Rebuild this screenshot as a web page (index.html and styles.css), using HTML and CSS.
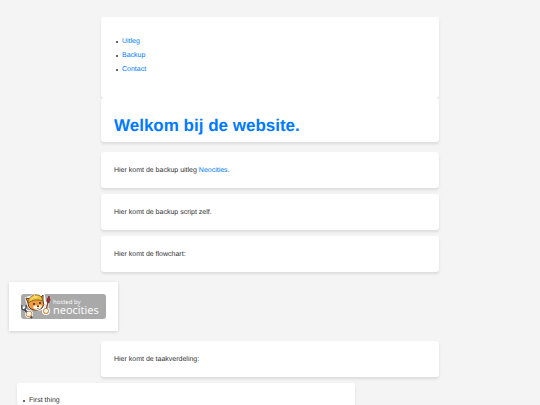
FILE: index.html
```html
<!DOCTYPE html>
<html lang="nl">
<head>
<meta charset="utf-8">
<meta name="viewport" content="width=device-width, initial-scale=1">
<title>Welkom bij de website.</title>
<link rel="stylesheet" href="styles.css">
</head>
<body>
<nav class="card nav">
  <ul class="list">
    <li><a href="#uitleg">Uitleg</a></li>
    <li><a href="#backup">Backup</a></li>
    <li><a href="#contact">Contact</a></li>
  </ul>
</nav>
<header class="card header">
  <h1>Welkom bij de website.</h1>
</header>
<main class="content">
  <p class="card" id="uitleg">Hier komt de backup uitleg <a href="#neocities">Neocities</a>.</p>
  <p class="card" id="backup">Hier komt de backup script zelf.</p>
  <p class="card">Hier komt de flowchart:</p>
  <a class="hosted" id="neocities" href="#neocities" aria-label="hosted by neocities">
    <svg class="badge" viewBox="0 0 85 25" aria-hidden="true">
      <rect x="0" y="0" width="85" height="25" rx="3" fill="#a9a9a9"/>
      <g stroke="#fff" stroke-width="2" stroke-linejoin="round" fill="#fff">
        <path d="M6 8 5 4 9 3Q14 0 19 1L23 1 24 9Q23 15 17 16 9 16 7 11Z"/>
        <path d="M2 13 9 22M25 16 28 3" stroke-width="3"/>
        <circle cx="8" cy="20" r="3"/><circle cx="25" cy="17" r="3"/>
      </g>
      <path d="M3 15 11 24" stroke="#454b50" stroke-width="2"/>
      <path d="M1 11Q0 16 3 16 6 15 5 11" fill="none" stroke="#454b50" stroke-width="1.3"/>
      <path d="M5 4 9 5 19 4 22 1 22 7Q24 11 21 14 16 18 10 15 7 13 7 9Z" fill="#f29a42" stroke="#5b3a22" stroke-width="1"/>
      <path d="M12 13Q14 10 16 12 19 10 21 12 20 15 17 16 13 16 12 13Z" fill="#fff0d8"/>
      <path d="M7 9Q7 3 13 1 19 0 21 4L22 7Q14 4 7 9Z" fill="#ecc03d" stroke="#795a20" stroke-width=".8"/>
      <path d="M10 6Q12 2 17 3M13 1 15 4" fill="none" stroke="#ffe680" stroke-width="1"/>
      <circle cx="13" cy="10" r="1" fill="#302820"/>
      <circle cx="19" cy="9" r="1" fill="#302820"/>
      <path d="M16 12H18L17 13ZM17 14V15" fill="#302820" stroke="#55392a" stroke-width="1"/>
      <path d="M25 17 27 8" stroke="#8c4c2c" stroke-width="1.4"/>
      <path d="M26 8Q25 5 28 2 30 5 28 9Z" fill="#a42c30" stroke="#5c2929" stroke-width=".6"/>
      <circle cx="8" cy="20" r="3" fill="#fff0d5" stroke="#84552f" stroke-width=".6"/>
      <circle cx="25" cy="17" r="2.7" fill="#fff0d5" stroke="#84552f" stroke-width=".6"/>
      <path d="M6 22Q8 24 11 21M23 19Q25 21 28 17" fill="none" stroke="#e89543" stroke-width="1"/>
      <text class="badge-small" x="32" y="10">hosted by</text>
      <text class="badge-name" x="32" y="20">neocities</text>
    </svg>
  </a>
  <p class="card">Hier komt de taakverdeling:</p>
  <ul class="card list tasks">
    <li>First thing</li>
  </ul>
</main>
</body>
</html>
```
FILE: styles.css
```css
* {
  box-sizing: border-box;
}

html {
  overflow: hidden;
}

body {
  margin: 0;
  padding: 17px 9px 0;
  background: #f4f4f4;
  color: #333;
  font: 7px/12px "Liberation Sans", Arial, sans-serif;
  text-rendering: geometricPrecision;
}

a {
  color: #007bff;
  text-decoration: none;
}

.card {
  width: 100%;
  max-width: 338px;
  margin: 0 auto 6px;
  padding: 13px 13px 11px;
  background: #fff;
  border-radius: 3px;
  box-shadow: 0 2px 3px rgba(0, 0, 0, 0.1);
}

.nav {
  margin-bottom: 0;
  padding: 18px 13px 21px;
}

.list {
  list-style: none;
}

.list li {
  display: flex;
  align-items: center;
  gap: 4px;
  line-height: 14px;
}

.list li::before {
  content: "";
  width: 2px;
  height: 2px;
  border-radius: 50%;
  background: #333;
}

.nav .list {
  margin: 0;
  padding: 0 0 0 2px;
}

.header {
  margin-bottom: 10px;
  padding: 18px 13px 6px;
}

h1 {
  margin: 0;
  color: #007bff;
  font-size: 17px;
  line-height: 20px;
}

.hosted {
  display: block;
  width: fit-content;
  margin: 10px 0;
  padding: 12px;
  background: #fff;
  box-shadow: 0 1px 3px rgba(0, 0, 0, 0.15);
}

.badge {
  display: block;
  width: 85px;
  height: 25px;
}

.badge-small,
.badge-name {
  fill: #fff;
  font-family: "Open Sans", "Noto Sans", sans-serif;
}

.badge-small {
  font-size: 6px;
}

.badge-name {
  font-size: 11px;
}

.tasks {
  margin: 0 8px;
  padding: 11px 6px;
}
```
